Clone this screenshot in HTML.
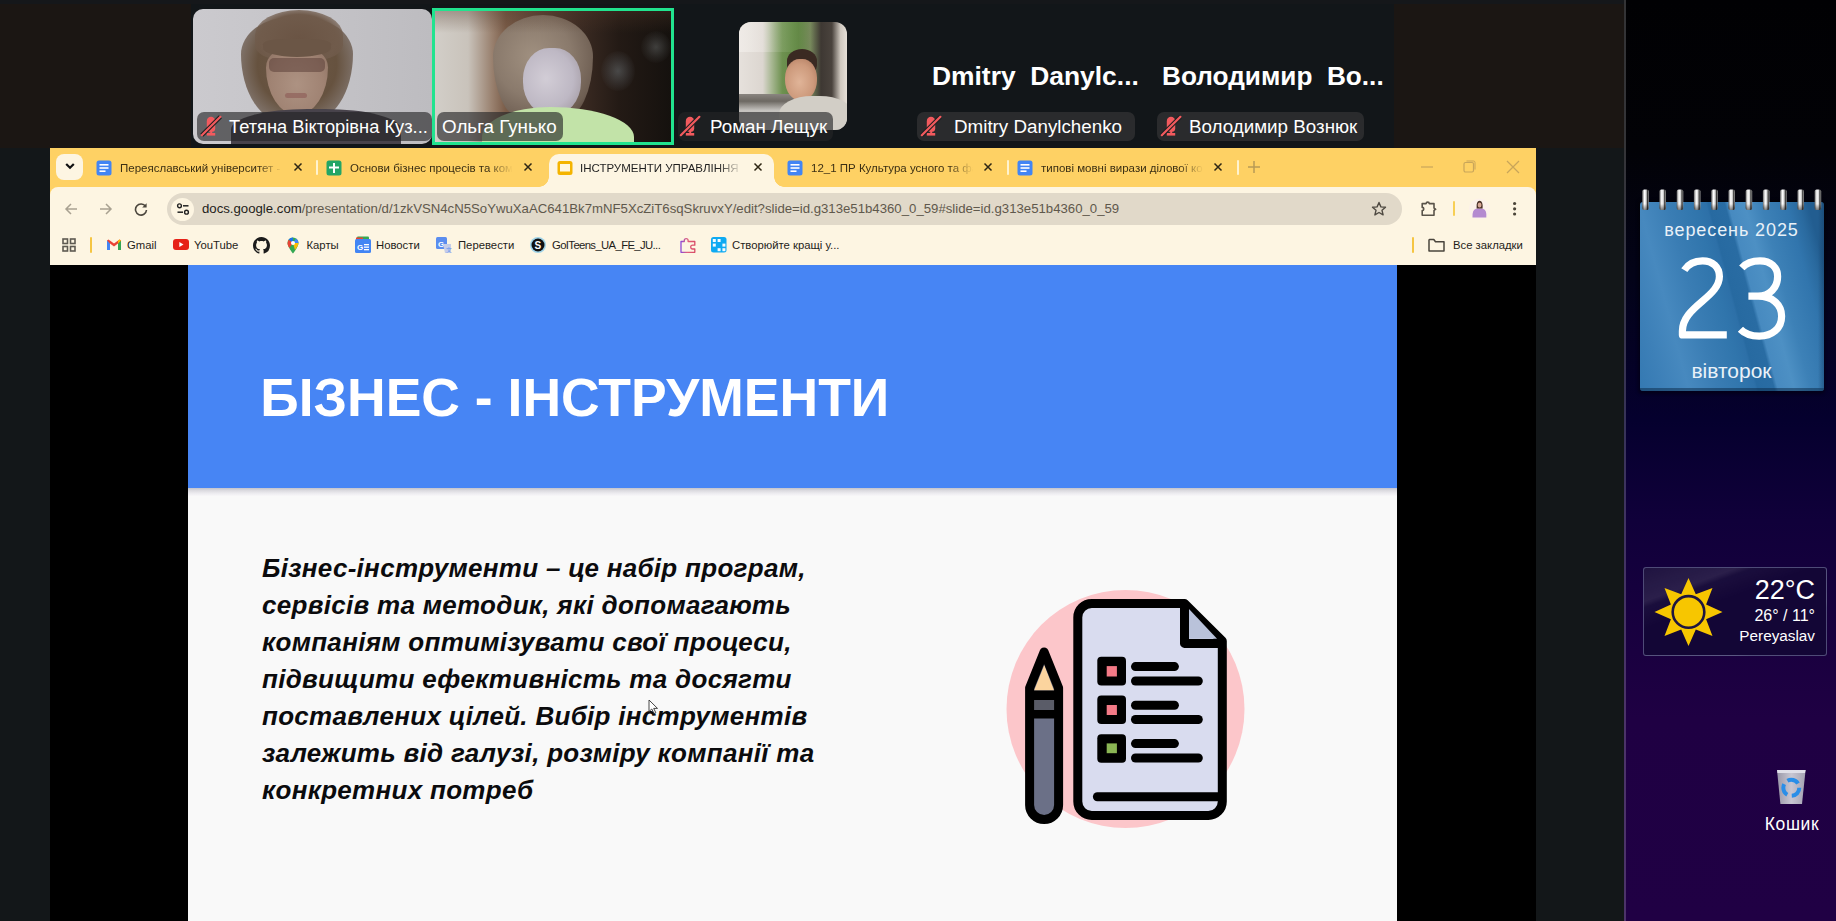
<!DOCTYPE html>
<html><head><meta charset="utf-8">
<style>
*{box-sizing:border-box}
html,body{margin:0;padding:0}
body{width:1836px;height:921px;overflow:hidden;position:relative;background:#131719;font-family:"Liberation Sans",sans-serif}
.a{position:absolute}
/* zoom strip */
#strip{left:0;top:0;width:1625px;height:148px;background:#1b1613}
#stripTop{left:0;top:0;width:1625px;height:4px;background:#15171a}
#gal{left:191px;top:4px;width:1203px;height:144px;background:#121619}
.tile{position:absolute;overflow:hidden}
.lbl{position:absolute;height:29px;border-radius:7px;background:rgba(36,36,38,0.63);color:#fff;font-size:18px;line-height:29px;white-space:nowrap}
.lbl .t{position:absolute;top:0}
.mic{position:absolute;top:4px;width:22px;height:20px;overflow:visible}
/* browser */
#br{left:50px;top:148px;width:1486px;height:117px;background:#fdf5e1}
#tabs{left:0;top:0;width:1486px;height:48px;background:#fed164}
.tt{position:absolute;top:10.5px;width:164px;height:18px;overflow:hidden;white-space:nowrap;font-size:11.5px;line-height:18px;color:#3b2f14;-webkit-mask-image:linear-gradient(90deg,#000 84%,transparent 99%)}
.tt.act{color:#1f1f1f}
.bk{position:absolute;top:88px;font-size:11.3px;line-height:18px;color:#1f1d1a;white-space:nowrap}
#content{left:50px;top:265px;width:1486px;height:656px;background:#000}
/* desktop */
#desk{left:1624px;top:0;width:212px;height:921px;background:linear-gradient(180deg,#010103 0%,#020206 16%,#030318 30%,#05002e 45.6%,#10003a 56.5%,#1f0043 78%,#200044 100%)}
#vline{left:1624px;top:0;width:2px;height:921px;background:rgba(255,255,255,0.2);z-index:2}
</style></head>
<body>
<div class="a" id="strip"></div>
<div class="a" id="stripTop"></div>
<div class="a" id="gal"></div>

<!-- tile 1 -->
<div class="tile" style="left:193px;top:9px;width:239px;height:135px;border-radius:10px;background:linear-gradient(90deg,#cbcace 0%,#c6c5c9 40%,#bdbcc0 100%)">
  <div class="a" style="left:48px;top:8px;width:112px;height:106px;border-radius:45% 45% 40% 40% / 35% 35% 65% 65%;background:radial-gradient(ellipse at 50% 45%,#6c5848 0%,#66523f 50%,rgba(110,95,85,0.75) 78%,rgba(190,188,190,0) 100%)"></div>
  <div class="a" style="left:62px;top:1px;width:88px;height:50px;border-radius:50% 50% 30% 30%;background:radial-gradient(ellipse at 50% 60%,#6a5444 0%,#705b4b 60%,rgba(112,95,82,0) 100%)"></div>
  <div class="a" style="left:73px;top:38px;width:62px;height:68px;border-radius:40% 40% 50% 50% / 30% 30% 70% 70%;background:radial-gradient(ellipse at 50% 55%,#ad9282 0%,#a08373 60%,#8a6f60 100%)"></div>
  <div class="a" style="left:70px;top:30px;width:68px;height:18px;border-radius:30% 30% 50% 50%;background:#6b5646"></div>
  <div class="a" style="left:76px;top:49px;width:56px;height:14px;border-radius:5px;background:rgba(85,58,52,0.5)"></div>
  <div class="a" style="left:92px;top:84px;width:22px;height:5px;border-radius:3px;background:rgba(140,90,85,0.6)"></div>
  <div class="a" style="left:38px;top:100px;width:170px;height:45px;border-radius:45% 45% 0 0;background:#48434b"></div>
</div>
<!-- tile 2 -->
<div class="tile" style="left:432px;top:8px;width:242px;height:137px;border:3px solid #21e38f;background:linear-gradient(90deg,#d2cec8 0%,#c9c3bb 14%,#9a8270 24%,#7a5c48 30%,#5a4236 45%,#3a2a22 62%,#231a15 78%,#15110e 100%)">
  <div class="a" style="left:58px;top:4px;width:100px;height:104px;border-radius:50% 50% 30% 30% / 40% 40% 60% 60%;background:radial-gradient(ellipse at 40% 40%,#a09080 0%,#8a7a6c 45%,#6e5e52 75%,rgba(90,75,65,0) 100%)"></div>
  <div class="a" style="left:88px;top:37px;width:58px;height:68px;border-radius:45% 45% 50% 50%;background:radial-gradient(ellipse at 40% 45%,#d2cdd6 0%,#beb8c4 55%,#968c92 100%)"></div>
  <div class="a" style="left:166px;top:40px;width:34px;height:40px;border-radius:50%;background:radial-gradient(ellipse,rgba(110,118,122,0.5) 0%,rgba(90,95,100,0.25) 45%,rgba(0,0,0,0) 75%)"></div>
  <div class="a" style="left:206px;top:20px;width:30px;height:32px;border-radius:50%;background:radial-gradient(ellipse,rgba(110,115,115,0.45) 0%,rgba(90,95,95,0.2) 45%,rgba(0,0,0,0) 75%)"></div>
  <div class="a" style="left:0;top:0;width:236px;height:22px;background:linear-gradient(180deg,rgba(80,55,40,0.35),rgba(0,0,0,0))"></div>
  <div class="a" style="left:47px;top:96px;width:152px;height:50px;border-radius:45% 55% 0 0 / 60% 60% 0 0;background:#c2e3a8"></div>
</div>
<!-- tile 3 avatar -->
<div class="tile" style="left:739px;top:22px;width:108px;height:108px;border-radius:12px;background:linear-gradient(90deg,#e6e1dc 0%,#dcd6d0 22%,#a9b894 30%,#6e9150 40%,#5b7f3e 55%,#77875c 66%,#3e3833 76%,#4a433d 86%,#cfc8bf 94%,#e6e0d8 100%)">
  <div class="a" style="left:0;top:0;width:108px;height:30px;background:linear-gradient(90deg,rgba(240,236,232,0.9) 0%,rgba(240,236,232,0.2) 30%,rgba(120,160,90,0.4) 50%,rgba(0,0,0,0) 70%)"></div>
  <div class="a" style="left:0;top:72px;width:62px;height:36px;background:linear-gradient(180deg,#8a8580 0%,#6d6862 20%,#c4c1bd 45%,#d0cecb 100%)"></div>
  <div class="a" style="left:48px;top:27px;width:30px;height:24px;border-radius:50% 50% 30% 30%;background:#3a2a22"></div>
  <div class="a" style="left:46px;top:37px;width:32px;height:42px;border-radius:45% 45% 50% 50%;background:radial-gradient(ellipse at 45% 55%,#e0b498 0%,#cd9a7c 55%,#a87358 100%)"></div>
  <div class="a" style="left:40px;top:74px;width:74px;height:40px;border-radius:45% 45% 0 0;background:#d2cec6"></div>
</div>
<!-- names -->
<div class="a" style="left:932px;top:58px;font-weight:bold;font-size:26.4px;color:#fff;white-space:pre;line-height:36px">Dmitry  Danylc...</div>
<div class="a" style="left:1162px;top:58px;font-weight:bold;font-size:26.2px;color:#fff;white-space:pre;line-height:36px">Володимир  Во...</div>
<!-- labels -->
<div class="lbl" style="left:197px;top:112px;width:235px"><svg class="mic" style="left:4px" viewBox="0 0 22 20"><use href="#micm"/></svg><span class="t" style="left:32px;font-size:18.3px">Тетяна Вікторівна Куз...</span></div>
<div class="lbl" style="left:437px;top:112px;width:126px"><span class="t" style="left:5px;font-size:18.8px">Ольга Гунько</span></div>
<div class="lbl" style="left:678px;top:112px;width:155px"><svg class="mic" style="left:2px" viewBox="0 0 22 20"><use href="#micm"/></svg><span class="t" style="left:32px;font-size:18.8px">Роман Лещук</span></div>
<div class="lbl" style="left:917px;top:112px;width:218px;background:#2a2b2d"><svg class="mic" style="left:4px" viewBox="0 0 22 20"><use href="#micm"/></svg><span class="t" style="left:37px;font-size:18.8px">Dmitry Danylchenko</span></div>
<div class="lbl" style="left:1157px;top:112px;width:207px;background:#2a2b2d"><svg class="mic" style="left:4px" viewBox="0 0 22 20"><use href="#micm"/></svg><span class="t" style="left:32px;font-size:18.8px">Володимир Вознюк</span></div>
<svg width="0" height="0" style="position:absolute"><defs>
<g id="micm"><path d="M5.8 5A4.2 4.2 0 0 1 14.2 5V12.5Q14.2 15.5 11.5 15.8H8.5Q5.8 15.5 5.8 12.5Z" fill="#f25a5e"/><rect x="9.2" y="15" width="2" height="2.5" fill="#f25a5e"/><rect x="5.8" y="17" width="8.4" height="2.6" fill="#f25a5e"/><path d="M0.8 19.2 L19.4 0.8" stroke="#1f1f21" stroke-width="4.4"/><path d="M0.8 19.2 L19.4 0.8" stroke="#f25a5e" stroke-width="2.2" stroke-linecap="round"/></g>
</defs></svg>

<div class="a" id="br">
  <div class="a" id="tabs"></div>
  <!-- toolbar cream w/ rounded top corners -->
  <div class="a" style="left:0;top:39px;width:1486px;height:78px;background:#fdf5e2;border-radius:8px 8px 0 0"></div>
  <!-- dropdown -->
  <div class="a" style="left:6px;top:6px;width:27px;height:26px;border-radius:8px;background:#fdf5e2"></div>
  <svg class="a" style="left:15px;top:14px" width="10" height="8" viewBox="0 0 10 8"><path d="M1.2 2 L5 5.8 L8.8 2" fill="none" stroke="#111" stroke-width="2.2"/></svg>
  <!-- active tab -->
  <div class="a" style="left:499px;top:5.5px;width:225px;height:34px;background:#fdf5e2;border-radius:10px 10px 0 0"></div>
  <div class="a" style="left:489px;top:29px;width:10px;height:10px;background:radial-gradient(circle at 0 0,rgba(0,0,0,0) 9.5px,#fdf5e2 10px)"></div>
  <div class="a" style="left:724px;top:29px;width:10px;height:10px;background:radial-gradient(circle at 100% 0,rgba(0,0,0,0) 9.5px,#fdf5e2 10px)"></div>
  <!-- separators -->
  <div class="a" style="left:266px;top:12px;width:2px;height:15px;background:#fff3cf;border-radius:1px"></div>
  <div class="a" style="left:957px;top:12px;width:2px;height:15px;background:#fff3cf;border-radius:1px"></div>
  <div class="a" style="left:1187px;top:12px;width:2px;height:15px;background:#fff3cf;border-radius:1px"></div>
  <!-- tab icons -->
  <svg class="a" style="left:46px;top:11.5px" width="16" height="16" viewBox="0 0 16 16"><rect x="0.5" y="0.5" width="15" height="15" rx="2.5" fill="#4285f4"/><rect x="3.5" y="4" width="9" height="1.6" fill="#fff"/><rect x="3.5" y="7.2" width="9" height="1.6" fill="#fff"/><rect x="3.5" y="10.4" width="6" height="1.6" fill="#fff"/></svg>
  <svg class="a" style="left:276px;top:11.5px" width="16" height="16" viewBox="0 0 16 16"><rect x="0.5" y="0.5" width="15" height="15" rx="2.5" fill="#23a566"/><rect x="7" y="3" width="2" height="10" fill="#fff"/><rect x="3" y="6.5" width="10" height="2" fill="#fff"/></svg>
  <svg class="a" style="left:507px;top:11.5px" width="16" height="16" viewBox="0 0 16 16"><rect x="0.5" y="1" width="15" height="14" rx="2.5" fill="#f4b400"/><rect x="3" y="4" width="10" height="7.5" fill="#fff7e0"/></svg>
  <svg class="a" style="left:737px;top:11.5px" width="16" height="16" viewBox="0 0 16 16"><rect x="0.5" y="0.5" width="15" height="15" rx="2.5" fill="#4285f4"/><rect x="3.5" y="4" width="9" height="1.6" fill="#fff"/><rect x="3.5" y="7.2" width="9" height="1.6" fill="#fff"/><rect x="3.5" y="10.4" width="6" height="1.6" fill="#fff"/></svg>
  <svg class="a" style="left:967px;top:11.5px" width="16" height="16" viewBox="0 0 16 16"><rect x="0.5" y="0.5" width="15" height="15" rx="2.5" fill="#4285f4"/><rect x="3.5" y="4" width="9" height="1.6" fill="#fff"/><rect x="3.5" y="7.2" width="9" height="1.6" fill="#fff"/><rect x="3.5" y="10.4" width="6" height="1.6" fill="#fff"/></svg>
  <!-- tab titles -->
  <div class="tt" style="left:70px">Переяславський університет - Переяславський</div>
  <div class="tt" style="left:300px">Основи бізнес процесів та комунікацій</div>
  <div class="tt act" style="left:530px">ІНСТРУМЕНТИ УПРАВЛІННЯ ПРОЦЕСАМИ</div>
  <div class="tt" style="left:761px">12_1 ПР Культура усного та фахового мовлення</div>
  <div class="tt" style="left:991px">типові мовні вирази ділової комунікації</div>
  <!-- close x -->
  <svg class="a cx" style="left:243px;top:14px" width="10" height="10" viewBox="0 0 10 10"><path d="M1.5 1.5L8.5 8.5M8.5 1.5L1.5 8.5" stroke="#2e2614" stroke-width="1.5"/></svg>
  <svg class="a cx" style="left:473px;top:14px" width="10" height="10" viewBox="0 0 10 10"><path d="M1.5 1.5L8.5 8.5M8.5 1.5L1.5 8.5" stroke="#2e2614" stroke-width="1.5"/></svg>
  <svg class="a cx" style="left:703px;top:14px" width="10" height="10" viewBox="0 0 10 10"><path d="M1.5 1.5L8.5 8.5M8.5 1.5L1.5 8.5" stroke="#2e2614" stroke-width="1.5"/></svg>
  <svg class="a cx" style="left:933px;top:14px" width="10" height="10" viewBox="0 0 10 10"><path d="M1.5 1.5L8.5 8.5M8.5 1.5L1.5 8.5" stroke="#2e2614" stroke-width="1.5"/></svg>
  <svg class="a cx" style="left:1163px;top:14px" width="10" height="10" viewBox="0 0 10 10"><path d="M1.5 1.5L8.5 8.5M8.5 1.5L1.5 8.5" stroke="#2e2614" stroke-width="1.5"/></svg>
  <!-- new tab + -->
  <svg class="a" style="left:1197px;top:12px" width="14" height="14" viewBox="0 0 14 14"><path d="M7 1V13M1 7H13" stroke="#b89a55" stroke-width="1.5"/></svg>
  <!-- window controls -->
  <svg class="a" style="left:1370px;top:12px" width="14" height="14" viewBox="0 0 14 14"><path d="M1 7H13" stroke="#c8a55a" stroke-width="1.2"/></svg>
  <svg class="a" style="left:1412px;top:12px" width="14" height="14" viewBox="0 0 14 14"><rect x="2" y="2.5" width="9.5" height="9.5" rx="1.5" fill="none" stroke="#c8a55a" stroke-width="1.2"/><path d="M4.5 1H11.5Q13 1 13 2.5V9.5" fill="none" stroke="#c8a55a" stroke-width="1"/></svg>
  <svg class="a" style="left:1456px;top:12px" width="14" height="14" viewBox="0 0 14 14"><path d="M1 1L13 13M13 1L1 13" stroke="#c8a55a" stroke-width="1.2"/></svg>

  <!-- toolbar -->
  <svg class="a" style="left:14px;top:54px" width="14" height="14" viewBox="0 0 14 14"><path d="M13 7H2M7 2L2 7L7 12" fill="none" stroke="#a9a191" stroke-width="1.5"/></svg>
  <svg class="a" style="left:49px;top:54px" width="14" height="14" viewBox="0 0 14 14"><path d="M1 7H12M7 2L12 7L7 12" fill="none" stroke="#a9a191" stroke-width="1.5"/></svg>
  <svg class="a" style="left:84px;top:53.5px" width="14" height="14" viewBox="0 0 14 14"><path d="M11.6 4.5A5.5 5.5 0 1 0 12.5 8" fill="none" stroke="#4b463d" stroke-width="1.6"/><path d="M12.6 1.2V5.6H8.2Z" fill="#4b463d"/></svg>
  <div class="a" style="left:117px;top:45px;width:1235px;height:32px;border-radius:16px;background:#e1d9c9"></div>
  <div class="a" style="left:121px;top:49.5px;width:23px;height:23px;border-radius:50%;background:#fdf5e2"></div>
  <svg class="a" style="left:125.5px;top:54px" width="14" height="14" viewBox="0 0 14 14"><circle cx="3.5" cy="3.8" r="1.9" fill="none" stroke="#222" stroke-width="1.4"/><path d="M7 3.8H12.5" stroke="#222" stroke-width="1.5"/><circle cx="10.5" cy="10.2" r="1.9" fill="none" stroke="#222" stroke-width="1.4"/><path d="M1.5 10.2H7" stroke="#222" stroke-width="1.5"/></svg>
  <div class="a" id="url" style="left:152px;top:52px;font-size:13.2px;line-height:18px;white-space:nowrap;color:#5f584c"><span style="color:#1f1d1a">docs.google.com</span>/presentation/d/1zkVSN4cN5SoYwuXaAC641Bk7mNF5XcZiT6sqSkruvxY/edit?slide=id.g313e51b4360_0_59#slide=id.g313e51b4360_0_59</div>
  <svg class="a" style="left:1321px;top:53px" width="16" height="16" viewBox="0 0 16 16"><path d="M8 1.5L9.9 5.9L14.5 6.3L11 9.3L12.1 13.9L8 11.5L3.9 13.9L5 9.3L1.5 6.3L6.1 5.9Z" fill="none" stroke="#4f4a42" stroke-width="1.4" stroke-linejoin="round"/></svg>
  <svg class="a" style="left:1368px;top:50px" width="20" height="20" viewBox="1418 198 20 20"><path d="M1422.2 203.6H1426.2A1.5 1.5 0 0 1 1429.2 203.6H1434V208A1.3 1.3 0 0 1 1434 210.4V215.2H1422.2V210.6A1.6 1.6 0 0 0 1422.2 207.4Z" fill="none" stroke="#5a544a" stroke-width="1.6" stroke-linejoin="round"/><path d="M1434.5 207.6L1436.8 209.2L1434.5 210.8Z" fill="#5a544a"/></svg>
  <div class="a" style="left:1402.8px;top:53px;width:2.2px;height:15px;background:#f7cf55;border-radius:1px"></div>
  <svg class="a" style="left:1418px;top:49px" width="22" height="22" viewBox="1468 197 22 22"><circle cx="1479.5" cy="209" r="10.5" fill="#fcf1ea"/><path d="M1472.5 217.5Q1472 210 1476 208.8L1479.5 208.2L1483 208.8Q1487 210 1486.3 217.5Z" fill="#b48ad0"/><path d="M1476.6 208.5Q1476 201 1479.6 200.8Q1483.2 201 1482.6 208.5Z" fill="#4a3028"/><ellipse cx="1479.6" cy="205" rx="1.9" ry="2.6" fill="#d9aa98"/></svg>
  <svg class="a" style="left:1461px;top:52px" width="8" height="16" viewBox="1511 200 8 16"><circle cx="1514.6" cy="203.5" r="1.6" fill="#4a4438"/><circle cx="1514.6" cy="208.8" r="1.6" fill="#4a4438"/><circle cx="1514.6" cy="214" r="1.6" fill="#4a4438"/></svg>

  <!-- bookmarks -->
  <svg class="a" style="left:12px;top:90px" width="14" height="14" viewBox="0 0 14 14"><g fill="none" stroke="#5e5a52" stroke-width="1.6"><rect x="1" y="1" width="4.5" height="4.5"/><rect x="8.5" y="1" width="4.5" height="4.5"/><rect x="1" y="8.5" width="4.5" height="4.5"/><rect x="8.5" y="8.5" width="4.5" height="4.5"/></g></svg>
  <div class="a" style="left:40px;top:89px;width:2px;height:16px;background:#f5c542;border-radius:1px"></div>
  <svg class="a" style="left:57px;top:91px" width="14" height="11" viewBox="0 0 14 11"><path d="M0 1.5V11H3V4.5L7 7.5L11 4.5V11H14V1.5L12.5 0.5L7 4.5L1.5 0.5Z" fill="#ea4335"/><path d="M0 1.5V11H3V4.5Z" fill="#4285f4"/><path d="M14 1.5V11H11V4.5Z" fill="#34a853"/><path d="M11 4.5L14 1.5L12.5 0.5L11 1.6Z" fill="#fbbc04"/></svg>
  <div class="bk" style="left:77px">Gmail</div>
  <svg class="a" style="left:123px;top:91px" width="16" height="11" viewBox="0 0 16 11"><rect x="0" y="0" width="16" height="11" rx="3" fill="#e62117"/><path d="M6.3 3V8L10.5 5.5Z" fill="#fff"/></svg>
  <div class="bk" style="left:144px">YouTube</div>
  <svg class="a" style="left:203px;top:88.5px" width="17" height="17" viewBox="0 0 16 16"><path fill="#1b1b1b" d="M8 0C3.58 0 0 3.58 0 8c0 3.54 2.29 6.53 5.47 7.59.4.07.55-.17.55-.38 0-.19-.01-.82-.01-1.49-2.01.37-2.53-.49-2.69-.94-.09-.23-.48-.94-.82-1.13-.28-.15-.68-.52-.01-.53.63-.01 1.08.58 1.23.82.72 1.21 1.87.87 2.33.66.07-.52.28-.87.51-1.07-1.78-.2-3.640-.89-3.64-3.95 0-.87.31-1.59.82-2.15-.08-.2-.36-1.02.08-2.12 0 0 .67-.21 2.2.82.64-.18 1.32-.27 2-.27.68 0 1.36.09 2 .27 1.53-1.04 2.2-.82 2.2-.82.44 1.1.16 1.92.08 2.12.51.56.82 1.27.82 2.15 0 3.07-1.87 3.75-3.65 3.950.29.25.54.73.54 1.48 0 1.07-.01 1.93-.01 2.2 0 .21.15.46.55.38A8.013 8.013 0 0016 8c0-4.42-3.58-8-8-8z"/></svg>
  <svg class="a" style="left:237px;top:88.5px" width="12" height="17" viewBox="0 0 12 17"><path d="M6 0.5A5.5 5.5 0 0 0 0.5 6C0.5 10 6 16.5 6 16.5S11.5 10 11.5 6A5.5 5.5 0 0 0 6 0.5Z" fill="#34a853"/><path d="M6 0.5A5.5 5.5 0 0 0 1.5 2.8L6 6Z" fill="#1a73e8"/><path d="M11.5 6A5.5 5.5 0 0 0 9 1.4L6 6Z" fill="#4285f4"/><path d="M0.5 6C0.5 7.5 1.3 9.3 2.3 11L6 6L1.5 2.8Z" fill="#ea4335"/><path d="M6 6L11.5 6C11.5 8 9.5 11 8 13Z" fill="#fbbc04"/><circle cx="6" cy="6" r="2" fill="#fff"/></svg>
  <div class="bk" style="left:256.5px">Карты</div>
  <svg class="a" style="left:305px;top:88px" width="16" height="17" viewBox="0 0 16 17"><rect x="2" y="0.5" width="12" height="5" rx="1" fill="#34a853"/><rect x="1" y="1.5" width="7" height="4" fill="#ea4335"/><rect x="0" y="3" width="16" height="14" rx="1.5" fill="#4285f4"/><text x="2" y="13.5" font-size="8" font-weight="bold" fill="#fff" font-family="Liberation Sans">G</text><rect x="9" y="8" width="5" height="1.3" fill="#fff"/><rect x="9" y="10.5" width="5" height="1.3" fill="#fff"/><rect x="9" y="13" width="5" height="1.3" fill="#fff"/></svg>
  <div class="bk" style="left:326px">Новости</div>
  <svg class="a" style="left:386px;top:88.5px" width="16" height="17" viewBox="0 0 16 17"><rect x="0" y="0" width="11" height="12" rx="1.5" fill="#5b8def"/><text x="2" y="9.5" font-size="8" font-weight="bold" fill="#fff" font-family="Liberation Sans">G</text><path d="M7 7H15V16H9Z" fill="#c5cde8"/><text x="9.5" y="14.5" font-size="6" fill="#5b8def" font-family="Liberation Sans">文</text></svg>
  <div class="bk" style="left:408px">Перевести</div>
  <svg class="a" style="left:480px;top:89px" width="16" height="16" viewBox="0 0 16 16"><circle cx="8" cy="8" r="8" fill="#9fd3e8"/><circle cx="8" cy="8" r="6.5" fill="#111"/><text x="4.6" y="11.8" font-size="10" font-weight="bold" fill="#fff" font-family="Liberation Sans">S</text></svg>
  <div class="bk" style="left:502px;letter-spacing:-0.62px">GoITeens_UA_FE_JU...</div>
  <svg class="a" style="left:628px;top:87px" width="20" height="20" viewBox="678 235 20 20"><defs><linearGradient id="pz" x1="0" x2="1"><stop offset="0" stop-color="#8a48d8"/><stop offset="0.45" stop-color="#e0607c"/><stop offset="1" stop-color="#d84a66"/></linearGradient></defs><path d="M681 241.5H684.3V240.6A1.9 1.9 0 0 1 688.1 240.6V241.5H694.8V245.2H692.6A1.9 1.9 0 0 0 692.6 249H694.8V252.3H681Z" fill="none" stroke="url(#pz)" stroke-width="1.3" stroke-linejoin="round"/></svg>
  <svg class="a" style="left:661px;top:89px" width="16" height="16" viewBox="711 237 16 16"><rect x="711" y="237" width="15.5" height="15.6" rx="2.5" fill="#0eaaf2"/><g fill="#f4fbff"><rect x="712.8" y="239" width="3" height="3"/><rect x="717.6" y="239" width="3" height="3"/><rect x="712.8" y="243.6" width="3" height="3"/><rect x="722.4" y="243.6" width="3" height="3"/><rect x="717.6" y="248.2" width="3" height="3"/><rect x="722.4" y="248.2" width="3" height="3"/></g></svg>
  <div class="bk" style="left:682px">Створюйте кращі у...</div>
  <div class="a" style="left:1362px;top:89px;width:2px;height:16px;background:#f5c542;border-radius:1px"></div>
  <svg class="a" style="left:1378px;top:90px" width="17" height="14" viewBox="0 0 17 14"><path d="M1 2V13H16V3.8H7.5L5.8 1.5H1.5Z" fill="none" stroke="#4a453d" stroke-width="1.5" stroke-linejoin="round"/></svg>
  <div class="bk" style="left:1403px">Все закладки</div>
</div>
<div class="a" id="content">
  <div class="a" style="left:138px;top:0;width:1209px;height:656px;background:#f9f9f9"></div>
  <div class="a" style="left:138px;top:222px;width:1209px;height:9px;background:linear-gradient(180deg,#b9b9c4 0%,#dcdbe0 40%,#ecebef 70%,#f8f7f9 100%)"></div>
  <div class="a" style="left:138px;top:0;width:1209px;height:222.5px;background:#4785f4"></div>
  <div class="a" id="title" style="left:210.2px;top:106.2px;font-size:53.5px;line-height:53.5px;font-weight:bold;color:#fff;white-space:nowrap">БІЗНЕС - ІНСТРУМЕНТИ</div>
  <div class="a" id="body" style="left:212px;top:284.6px;font-size:26px;line-height:37.1px;font-weight:bold;font-style:italic;color:#0b0b0d;white-space:nowrap">
    <div style="letter-spacing:0.3px">Бізнес-інструменти – це набір програм,</div>
    <div style="letter-spacing:0.3px">сервісів та методик, які допомагають</div>
    <div style="letter-spacing:0.3px">компаніям оптимізувати свої процеси,</div>
    <div style="letter-spacing:0.3px">підвищити ефективність та досягти</div>
    <div style="letter-spacing:0.3px">поставлених цілей. Вибір інструментів</div>
    <div style="letter-spacing:0.3px">залежить від галузі, розміру компанії та</div>
    <div style="letter-spacing:0.3px">конкретних потреб</div>
  </div>
</div>
<svg class="a" style="left:990px;top:580px" width="280" height="260" viewBox="990 580 280 260">
  <circle cx="1125.5" cy="709" r="119" fill="#fcc6ca"/>
  <!-- pencil -->
  <path d="M1044.1 652 L1058.6 688 V805 A14.5 14.5 0 0 1 1029.6 805 V688 Z" fill="#6b7087"/>
  <path d="M1044.3 665 L1054 690.5 H1034 Z" fill="#fbd49e"/>
  <rect x="1030" y="690.5" width="28" height="9.5" fill="#000"/>
  <rect x="1030" y="700" width="28" height="10" fill="#5a5c68"/>
  <rect x="1030" y="710" width="28" height="8.5" fill="#000"/>
  <path d="M1044.1 652 L1058.6 688 V805 A14.5 14.5 0 0 1 1029.6 805 V688 Z" fill="none" stroke="#000" stroke-width="9" stroke-linejoin="round"/>
  <!-- page -->
  <path d="M1091.8 603.4 H1184.5 L1222.3 641 V801.5 A14 14 0 0 1 1208.3 815.5 H1091.8 A14 14 0 0 1 1077.8 801.5 V617.4 A14 14 0 0 1 1091.8 603.4 Z" fill="#d9dcef" stroke="#000" stroke-width="9" stroke-linejoin="round"/>
  <path d="M1189 609 V638.8 H1217 Z" fill="#b9c2da"/>
  <path d="M1184.5 603.4 V643.4 H1222.3" fill="none" stroke="#000" stroke-width="9" stroke-linejoin="round"/>
  <g fill="#000">
    <rect x="1097.3" y="656.7" width="28.7" height="28.9" rx="4"/>
    <rect x="1097.3" y="695.5" width="28.7" height="28.5" rx="4"/>
    <rect x="1097.3" y="734.2" width="28.7" height="28.6" rx="4"/>
  </g>
  <rect x="1106.7" y="666.1" width="10.2" height="10.4" fill="#f47a87"/>
  <rect x="1106.7" y="705" width="10.2" height="10" fill="#f47a87"/>
  <rect x="1106.7" y="743.4" width="10.2" height="9.8" fill="#8ab554"/>
  <g stroke="#000" stroke-width="9" stroke-linecap="round">
    <path d="M1135.5 666.6 H1174.4"/><path d="M1135.5 681 H1198.3"/>
    <path d="M1135.5 705.2 H1174.4"/><path d="M1135.5 719.5 H1198.3"/>
    <path d="M1135.5 743.6 H1174.4"/><path d="M1135.5 758 H1198.3"/>
    <path d="M1097.4 796.8 H1218"/>
  </g>
</svg>

<svg class="a" style="left:648px;top:699px" width="14" height="16" viewBox="0 0 14 16"><path d="M1 1V12.5L3.8 10L6 14.5L7.8 13.7L5.7 9.4H9.5Z" fill="#fff" stroke="#333" stroke-width="0.9" stroke-linejoin="round"/></svg>
<div class="a" id="vline"></div>
<div class="a" id="desk"></div>
<!-- calendar gadget -->
<div class="a" style="left:1638px;top:200px;width:187px;height:194px;border-radius:4px;background:rgba(0,0,0,0.35);filter:blur(1.5px)"></div>
<div class="a" id="cal" style="left:1639.5px;top:202.4px;width:184px;height:188.5px;border-radius:3px;overflow:hidden;background:linear-gradient(75deg,#3479b2 0%,#3d80b8 10%,#4789bf 21%,#3a7db4 33%,#3075ac 45%,#2d70a8 49.5%,#276aa1 50.5%,#296ca3 57.5%,#478ac0 59%,#4d90c4 66%,#3d81b7 73%,#3175ad 84%,#2a6a9f 89%,#225d90 93%,#225d90 100%)">
  <div class="a" style="left:0;bottom:0;width:184px;height:3px;background:rgba(10,40,70,0.5)"></div>
  <div class="a" style="right:0;top:0;width:6px;height:188.5px;background:linear-gradient(90deg,rgba(20,60,100,0) 0%,rgba(20,60,100,0.45) 100%)"></div>
</div>
<div class="a" style="left:1639.5px;top:221px;width:184px;text-align:center;color:#e9f1f8;font-size:18px;line-height:18px;letter-spacing:0.9px;white-space:nowrap">вересень 2025</div>
<svg class="a" id="day" style="left:1670px;top:250px" width="125" height="95" viewBox="1670 250 125 95"><g fill="none" stroke="#fff" stroke-width="7.2" stroke-linejoin="round">
<path d="M1684.3 270.2C1688 264.2 1695 260.8 1702.6 260.8C1712.8 260.8 1719.4 267.2 1719.4 276.6C1719.4 286 1712 293 1702 301.5C1692 310 1682.4 318.5 1682.4 331V334.9H1726.8"/>
<path d="M1741.8 267.8C1745.6 263.6 1752 260.8 1760 260.8C1770.6 260.8 1777.6 267 1777.6 276.6C1777.6 287.6 1769.6 296.2 1758 296.2H1748.4M1758 296.2C1772.2 296.2 1781.6 304.2 1781.6 316.2C1781.6 328.6 1772 336.1 1759.2 336.1C1751.2 336.1 1744.6 333.6 1740.4 329.2"/>
</g></svg>
<div class="a" style="left:1639.5px;top:360px;width:184px;text-align:center;color:#e9f1f8;font-size:21px;line-height:21px;white-space:nowrap">вівторок</div>
<svg class="a" style="left:1640px;top:188px" width="184" height="24" viewBox="0 0 184 24">
  <defs><linearGradient id="ring" x1="0" x2="1" y1="0" y2="0"><stop offset="0" stop-color="#6a6a6a"/><stop offset="0.35" stop-color="#ffffff"/><stop offset="0.6" stop-color="#d8d8d8"/><stop offset="0.8" stop-color="#3a3a3a"/><stop offset="1" stop-color="#9a9a9a"/></linearGradient>
  <linearGradient id="ringv" x1="0" x2="0" y1="0" y2="1"><stop offset="0" stop-color="#000" stop-opacity="0"/><stop offset="0.7" stop-color="#000" stop-opacity="0"/><stop offset="1" stop-color="#000" stop-opacity="0.5"/></linearGradient></defs>
  <g><rect x="2.2" y="1.5" width="6.6" height="20.5" rx="2" fill="url(#ring)"/><rect x="2.2" y="1.5" width="6.6" height="20.5" rx="2" fill="url(#ringv)"/><rect x="19.4" y="1.5" width="6.6" height="20.5" rx="2" fill="url(#ring)"/><rect x="19.4" y="1.5" width="6.6" height="20.5" rx="2" fill="url(#ringv)"/><rect x="36.7" y="1.5" width="6.6" height="20.5" rx="2" fill="url(#ring)"/><rect x="36.7" y="1.5" width="6.6" height="20.5" rx="2" fill="url(#ringv)"/><rect x="53.9" y="1.5" width="6.6" height="20.5" rx="2" fill="url(#ring)"/><rect x="53.9" y="1.5" width="6.6" height="20.5" rx="2" fill="url(#ringv)"/><rect x="71.2" y="1.5" width="6.6" height="20.5" rx="2" fill="url(#ring)"/><rect x="71.2" y="1.5" width="6.6" height="20.5" rx="2" fill="url(#ringv)"/><rect x="88.4" y="1.5" width="6.6" height="20.5" rx="2" fill="url(#ring)"/><rect x="88.4" y="1.5" width="6.6" height="20.5" rx="2" fill="url(#ringv)"/><rect x="105.6" y="1.5" width="6.6" height="20.5" rx="2" fill="url(#ring)"/><rect x="105.6" y="1.5" width="6.6" height="20.5" rx="2" fill="url(#ringv)"/><rect x="122.9" y="1.5" width="6.6" height="20.5" rx="2" fill="url(#ring)"/><rect x="122.9" y="1.5" width="6.6" height="20.5" rx="2" fill="url(#ringv)"/><rect x="140.1" y="1.5" width="6.6" height="20.5" rx="2" fill="url(#ring)"/><rect x="140.1" y="1.5" width="6.6" height="20.5" rx="2" fill="url(#ringv)"/><rect x="157.4" y="1.5" width="6.6" height="20.5" rx="2" fill="url(#ring)"/><rect x="157.4" y="1.5" width="6.6" height="20.5" rx="2" fill="url(#ringv)"/><rect x="174.6" y="1.5" width="6.6" height="20.5" rx="2" fill="url(#ring)"/><rect x="174.6" y="1.5" width="6.6" height="20.5" rx="2" fill="url(#ringv)"/></g>
</svg>
<!-- weather gadget -->
<div class="a" style="left:1643px;top:567.4px;width:184px;height:88.4px;border-radius:3px;border:1px solid rgba(150,160,200,0.45);background:linear-gradient(160deg,rgba(255,255,255,0.05) 0%,rgba(255,255,255,0.10) 22%,rgba(255,255,255,0.03) 26%,rgba(0,0,0,0) 40%),#130636"></div>
<svg class="a" style="left:1650px;top:574px" width="78" height="76" viewBox="1650 574 78 76">
  <path id="sunrays" fill="#f7c600" d="M1688.5 577.9 L1695.8 594.3 L1712.5 587.9 L1706.1 604.6 L1722.5 611.9 L1706.1 619.2 L1712.5 635.9 L1695.8 629.5 L1688.5 645.9 L1681.2 629.5 L1664.5 635.9 L1670.9 619.2 L1654.5 611.9 L1670.9 604.6 L1664.5 587.9 L1681.2 594.3 Z"/>
  <circle cx="1688.5" cy="611.9" r="15.8" fill="#f7c600" stroke="#1e1540" stroke-width="2.6"/>
</svg>
<div class="a" style="left:1700px;top:575px;width:115px;text-align:right;color:#fff;font-size:27px;line-height:30px;white-space:nowrap">22°C</div>
<div class="a" style="left:1700px;top:606px;width:115px;text-align:right;color:#fff;font-size:16px;line-height:20px;white-space:nowrap">26° / 11°</div>
<div class="a" style="left:1690px;top:626px;width:125px;text-align:right;color:#fff;font-size:15.3px;line-height:20px;white-space:nowrap">Pereyaslav</div>
<!-- recycle bin -->
<svg class="a" style="left:1772px;top:766px" width="40" height="42" viewBox="1772 766 40 42">
  <defs><linearGradient id="bing" x1="0" x2="1"><stop offset="0" stop-color="#9a98a8"/><stop offset="0.5" stop-color="#c8c6d2"/><stop offset="1" stop-color="#a4a2b2"/></linearGradient></defs>
  <path d="M1777 770 H1805.6 L1802 804 H1780.4 Z" fill="url(#bing)"/>
  <path d="M1777 770 H1805.6 L1805 773 H1777.5 Z" fill="#e0dfe8"/>
  <circle cx="1791.3" cy="787.8" r="8" fill="none" stroke="#2a8ee8" stroke-width="4" stroke-dasharray="12 4.7"/>
</svg>
<div class="a" style="left:1740px;top:814px;width:104px;text-align:center;color:#fff;font-size:17.5px;line-height:20px;letter-spacing:0.6px;white-space:nowrap">Кошик</div>
</body></html>
